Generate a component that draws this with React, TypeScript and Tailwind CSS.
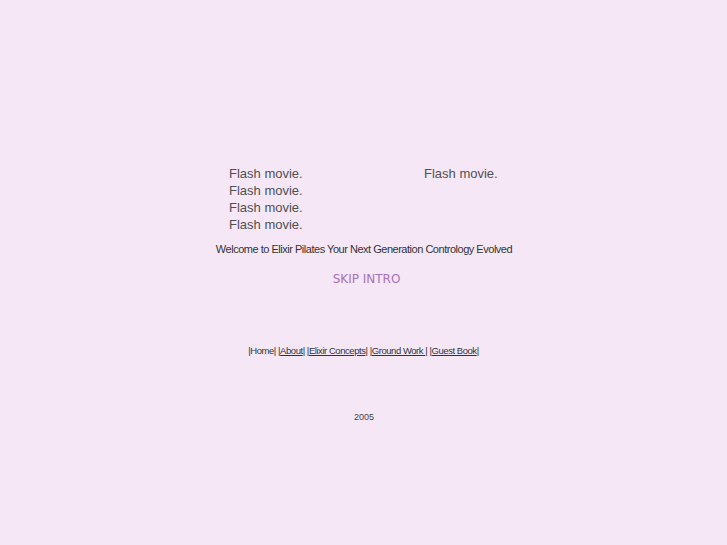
export default function App() {
  const arial = { fontFamily: '"Liberation Sans", Arial, sans-serif' };
  return (
    <div className="w-full min-h-[545px] bg-[#f6e7f7] pt-[165px]" style={arial}>
      <div className="flex pl-[229px] text-[13px] leading-[17px] text-[#505050]">
        <div className="w-[195px] flex flex-col">
          <span>Flash movie.</span>
          <span>Flash movie.</span>
          <span>Flash movie.</span>
          <span>Flash movie.</span>
        </div>
        <div className="flex flex-col">
          <span>Flash movie.</span>
        </div>
      </div>
      <div className="mt-[10px] text-center text-[11px] leading-[13px] text-[#333] tracking-[-0.48px] pl-[1px]">
        Welcome to Elixir Pilates Your Next Generation Contrology Evolved
      </div>
      <div
        className="mt-[16px] flex justify-center text-[12px] leading-[14px] text-[#a672ba] pl-[6px]"
        style={{ fontFamily: '"DejaVu Sans", Verdana, sans-serif' }}
      >
        SKIP INTRO
      </div>
      <div className="mt-[59px] text-center text-[9.5px] leading-[12px] text-[#333] tracking-[-0.45px]">
        |Home| |<span className="underline">About</span>| |
        <span className="underline">Elixir Concepts</span>| |
        <span className="underline">Ground Work </span>| |
        <span className="underline">Guest Book</span>|
      </div>
      <div className="mt-[55px] text-center text-[9px] leading-[11px] text-[#444] pl-[1px]">2005</div>
    </div>
  );
}
